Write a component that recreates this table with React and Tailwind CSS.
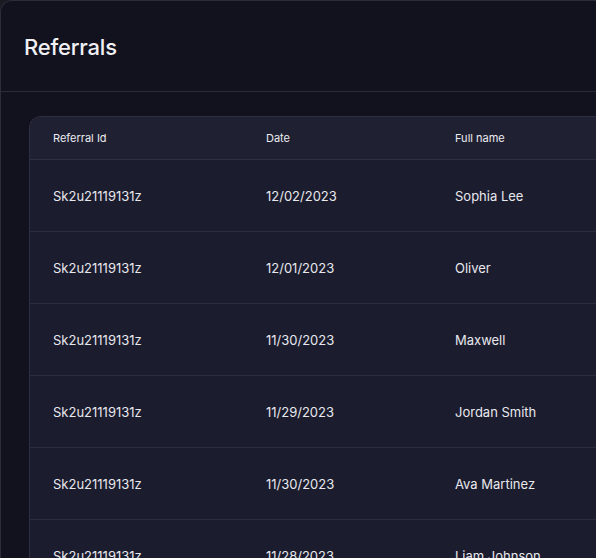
const ROWS = [
  { id: "Sk2u21119131z", date: "12/02/2023", name: "Sophia Lee", email: "sophia.lee@mail.com", status: "Completed" },
  { id: "Sk2u21119131z", date: "12/01/2023", name: "Oliver", email: "oliver@mail.com", status: "Pending" },
  { id: "Sk2u21119131z", date: "11/30/2023", name: "Maxwell", email: "maxwell@mail.com", status: "Completed" },
  { id: "Sk2u21119131z", date: "11/29/2023", name: "Jordan Smith", email: "jordan.smith@mail.com", status: "Completed" },
  { id: "Sk2u21119131z", date: "11/30/2023", name: "Ava Martinez", email: "ava.martinez@mail.com", status: "Pending" },
  { id: "Sk2u21119131z", date: "11/28/2023", name: "Liam Johnson", email: "liam.johnson@mail.com", status: "Completed" },
];

const COLS = "grid grid-cols-[213px_189px_220px_240px_140px]";

export default function App() {
  return (
    <div
      className="w-[596px] h-[558px] overflow-hidden bg-[#1b1b24]"
      style={{ fontFamily: "Inter, 'Liberation Sans', sans-serif" }}
    >
      <div className="w-[1100px] h-[700px] bg-[#12121f] rounded-tl-xl border-t border-l border-[#2c2c3a]">
        {/* header */}
        <div className="h-[91px] border-b border-[#2a2a3a] pl-[23px] pt-[30px]">
          <h1 className="text-[22px] font-medium text-[#f0f0f4] leading-8 tracking-[-0.2px]">Referrals</h1>
        </div>

        {/* table */}
        <div className="pl-[28px] pt-6">
          <div className="w-[1040px] rounded-tl-xl border-t border-l border-[#2e2f41] bg-[#1b1c2d] overflow-hidden">
            <div className={`${COLS} h-[43px] items-center px-[23px] bg-[#1f2031] border-b border-[#2e2f41] text-[11px] text-[#ececf2]`}>
              <div>Referral Id</div>
              <div>Date</div>
              <div>Full name</div>
              <div>Email</div>
              <div>Status</div>
            </div>
            {ROWS.map((r, i) => (
              <div
                key={i}
                className={`${COLS} h-[72px] items-center px-[23px] pt-[2px] border-b border-[#2b2c3d] text-[13px] text-[#e8e8ee]`}
              >
                <div>{r.id}</div>
                <div>{r.date}</div>
                <div>{r.name}</div>
                <div>{r.email}</div>
                <div>{r.status}</div>
              </div>
            ))}
          </div>
        </div>
      </div>
    </div>
  );
}
